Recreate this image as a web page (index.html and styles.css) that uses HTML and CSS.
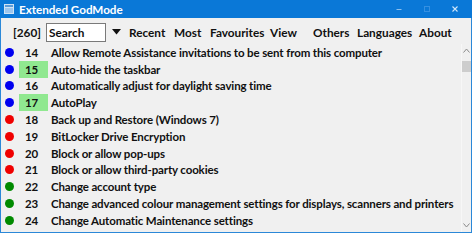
FILE: index.html
```html
<!DOCTYPE html>
<html>
<head>
<meta charset="utf-8">
<link rel="stylesheet" href="styles.css">
</head>
<body>
<div class="window">
  <div class="titlebar">
    <svg class="appicon" width="10" height="10" viewBox="0 0 10 10">
      <rect x="0" y="0" width="10" height="10" fill="#cfe3f5"/>
      <rect x="1" y="1" width="8" height="2" fill="#5a9bd8"/>
      <rect x="1" y="4" width="8" height="5" fill="#9cc6ee"/>
    </svg>
    <span class="title">Extended GodMode</span>
    <div class="controls">
      <span class="ctl"><svg width="6" height="6" viewBox="0 0 6 6"><line x1="0.5" y1="3.5" x2="5.5" y2="3.5" stroke="#8cc0ee" stroke-width="1"/></svg></span>
      <span class="ctl"><svg width="6" height="6" viewBox="0 0 6 6"><rect x="0.5" y="0.5" width="5" height="5" fill="none" stroke="#3590e2" stroke-width="1"/></svg></span>
      <span class="ctl"><svg width="6" height="6" viewBox="0 0 6 6"><path d="M0.5 0.5 L5.5 5.5 M5.5 0.5 L0.5 5.5" stroke="#cfe6fa" stroke-width="1.1"/></svg></span>
    </div>
  </div>
  <div class="toolbar">
    <span class="count">[260]</span>
    <span class="search">Search</span>
    <svg class="drop" width="9" height="6" viewBox="0 0 9 6"><path d="M0 0 L9 0 L4.5 5.5 Z" fill="#111"/></svg>
    <span class="menu m-recent">Recent</span>
    <span class="menu m-most">Most</span>
    <span class="menu m-fav">Favourites</span>
    <span class="menu m-view">View</span>
    <span class="menu m-others">Others</span>
    <span class="menu m-lang">Languages</span>
    <span class="menu m-about">About</span>
  </div>
  <div class="content">
    <div class="list">
      <div class="row"><span class="dot blue"></span><span class="num">14</span><span class="label">Allow Remote Assistance invitations to be sent from this computer</span></div>
      <div class="row"><span class="dot blue"></span><span class="num hl">15</span><span class="label">Auto-hide the taskbar</span></div>
      <div class="row"><span class="dot blue"></span><span class="num">16</span><span class="label">Automatically adjust for daylight saving time</span></div>
      <div class="row"><span class="dot blue"></span><span class="num hl">17</span><span class="label">AutoPlay</span></div>
      <div class="row"><span class="dot red"></span><span class="num">18</span><span class="label">Back up and Restore (Windows 7)</span></div>
      <div class="row"><span class="dot red"></span><span class="num">19</span><span class="label">BitLocker Drive Encryption</span></div>
      <div class="row"><span class="dot red"></span><span class="num">20</span><span class="label">Block or allow pop-ups</span></div>
      <div class="row"><span class="dot red"></span><span class="num">21</span><span class="label">Block or allow third-party cookies</span></div>
      <div class="row"><span class="dot green"></span><span class="num">22</span><span class="label">Change account type</span></div>
      <div class="row"><span class="dot green"></span><span class="num">23</span><span class="label">Change advanced colour management settings for displays, scanners and printers</span></div>
      <div class="row"><span class="dot green"></span><span class="num">24</span><span class="label">Change Automatic Maintenance settings</span></div>
    </div>
    <div class="scrollbar">
      <svg class="arrow" width="7" height="5" viewBox="0 0 7 5"><path d="M0.5 4.5 L3.5 1 L6.5 4.5" fill="none" stroke="#8a8a8a" stroke-width="1"/></svg>
      <div class="thumb"></div>
      <div class="track"></div>
      <svg class="arrow" width="7" height="5" viewBox="0 0 7 5"><path d="M0.5 0.5 L3.5 4 L6.5 0.5" fill="none" stroke="#8a8a8a" stroke-width="1"/></svg>
    </div>
  </div>
</div>
</body>
</html>
```
FILE: styles.css
```css
* { box-sizing: border-box; }
html, body { margin: 0; padding: 0; }
body {
  width: 472px;
  height: 233px;
  overflow: hidden;
  font-family: Lato, "Noto Sans", sans-serif;
  font-weight: bold;
  color: #111;
}
.window {
  width: 472px;
  height: 233px;
  background: #f0f0f0;
  border: 1px solid #2b88d8;
  border-top: none;
  display: flex;
  flex-direction: column;
}
.titlebar {
  height: 18px;
  background: #0a78d7;
  display: flex;
  align-items: center;
  padding-left: 4px;
  margin: 0 -1px;
  flex: none;
}
.appicon { margin-right: 5px; flex: none; }
.title {
  color: #fff;
  font-size: 11.7px;
  letter-spacing: -0.05px;
}
.controls {
  margin-left: auto;
  margin-right: 3px;
  display: flex;
  align-items: center;
  height: 18px;
}
.ctl {
  width: 28px;
  display: flex;
  justify-content: center;
}
.toolbar {
  height: 26px;
  display: flex;
  align-items: center;
  font-size: 11.8px;
  flex: none;
  padding-top: 2px;
}
.toolbar > * { flex: none; }
.count { margin-left: 12px; width: 33px; }
.search {
  width: 60px;
  height: 19px;
  background: #fff;
  border: 1px solid #7a7a7a;
  padding-left: 2px;
  line-height: 17px;
}
.drop { margin-left: 6px; margin-right: 8px; }
.m-recent { width: 45px; }
.m-most { width: 36px; }
.m-fav { width: 60px; }
.m-view { width: 43px; }
.m-others { width: 44px; }
.m-lang { width: 62px; }
.content {
  flex: 1;
  display: flex;
  min-height: 0;
}
.list {
  flex: 1;
  font-size: 11.5px;
  letter-spacing: -0.13px;
  overflow: hidden;
}
.row {
  height: 16.8px;
  display: flex;
  align-items: center;
  white-space: nowrap;
}
.dot {
  width: 9px;
  height: 9px;
  border-radius: 50%;
  margin-left: 4px;
  flex: none;
}
.blue { background: #0000f0; }
.red { background: #f00000; }
.green { background: #008a00; }
.num {
  width: 29px;
  margin-left: 5px;
  height: 100%;
  display: flex;
  align-items: center;
  justify-content: flex-end;
  padding-right: 10px;
  flex: none;
}
.num.hl { background: #90e890; }
.label { margin-left: 3px; }
.scrollbar {
  width: 10px;
  border-left: 1px solid #f7f7f7;
  display: flex;
  flex-direction: column;
  align-items: center;
  padding: 4px 0 4px;
  flex: none;
}
.arrow { flex: none; }
.thumb {
  width: 9px;
  height: 11px;
  background: #cdcdcd;
  margin-top: 8px;
}
.track { flex: 1; }
```
